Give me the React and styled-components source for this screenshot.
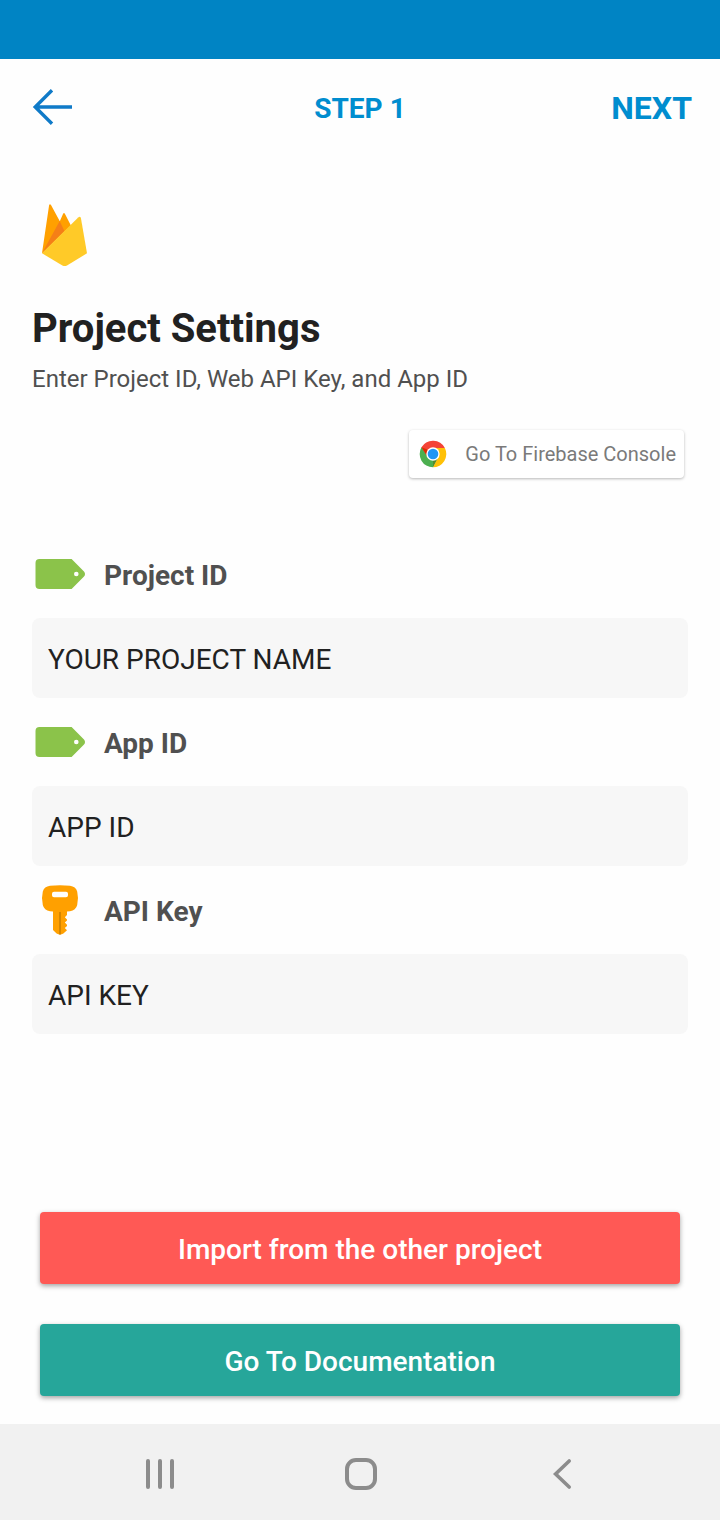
import React from "react";
import styled, { createGlobalStyle } from "styled-components";

const GlobalStyle = createGlobalStyle`
  *, *::before, *::after { box-sizing: border-box; }
  body {
    margin: 0;
    background: #fefefe;
    font-family: Roboto, "Noto Sans", sans-serif;
  }
  button, input { font-family: inherit; }
  svg { display: block; flex: none; }
`;

const Page = styled.div`
  min-height: 100vh;
  display: flex;
  flex-direction: column;
`;

const StatusBar = styled.div`
  height: 59px;
  background: #0084c4;
`;

const Header = styled.header`
  display: grid;
  grid-template-columns: 1fr auto 1fr;
  align-items: center;
  height: 96px;
  padding: 0 28px;
`;

const PlainButton = styled.button`
  display: flex;
  align-items: center;
  justify-content: center;
  padding: 0;
  border: 0;
  background: none;
  color: ${(p) => p.$color || "inherit"};
  cursor: pointer;
`;

const BackButton = styled(PlainButton)`
  justify-self: start;
`;

const NextButton = styled(PlainButton)`
  justify-self: end;
  padding-top: 2px;
  font-size: 32px;
  line-height: 40px;
  font-weight: 700;
`;

const StepTitle = styled.div`
  padding-top: 4px;
  color: #008dcf;
  font-size: 28px;
  line-height: 32px;
  font-weight: 700;
`;

const Content = styled.main`
  flex: 1;
  display: flex;
  flex-direction: column;
  padding: 48px 32px 28px;
`;

const Title = styled.h1`
  margin: 38px 0 0;
  color: #212121;
  font-size: 40px;
  line-height: 48px;
  font-weight: 700;
`;

const Subtitle = styled.p`
  margin: 12px 0 0;
  color: #505050;
  font-size: 24px;
  line-height: 28px;
`;

const ConsoleButton = styled.button`
  align-self: flex-end;
  display: flex;
  align-items: center;
  gap: 16px;
  height: 48px;
  margin: 37px 4px 52px 0;
  padding: 0 8px;
  border: 0;
  border-radius: 4px;
  background: #fff;
  box-shadow: 0 1px 3px rgba(0, 0, 0, 0.28);
  color: #7a7a7a;
  font-size: 20px;
  line-height: 24px;
  white-space: nowrap;
  cursor: pointer;
`;

const Label = styled.label`
  display: flex;
  align-items: center;
  gap: 16px;
  height: 88px;
  color: #505050;
  font-size: 28px;
  line-height: 32px;
  font-weight: 700;
`;

const LabelText = styled.span`
  padding-top: 4px;
`;

const TextInput = styled.input`
  display: block;
  width: 100%;
  height: 80px;
  padding: 2px 16px 0;
  border: 0;
  border-radius: 8px;
  outline: 0;
  background: #f7f7f7;
  color: #212121;
  font-size: 28px;
  line-height: 32px;
`;

const Actions = styled.div`
  display: flex;
  flex-direction: column;
  gap: 40px;
  margin-top: auto;
  padding: 40px 8px 0;
`;

const ActionButton = styled.button`
  height: 72px;
  padding: 4px 16px 0;
  border: 0;
  border-radius: 4px;
  background: ${(p) => p.$color};
  box-shadow: 0 2px 5px rgba(0, 0, 0, 0.36);
  color: #fff;
  font-size: 28px;
  line-height: 32px;
  font-weight: 500;
  cursor: pointer;
`;

const NavBar = styled.nav`
  display: flex;
  align-items: center;
  justify-content: center;
  gap: 169px;
  height: 96px;
  padding: 4px 0 0 2px;
  background: #f1f1f1;
`;

const BackArrow = () => (
  <svg width="48" height="48" viewBox="0 0 48 48" fill="none" stroke="#0f7ac8" strokeWidth="3.4">
    <path d="M44 24H7M24 7.2 7.2 24 24 40.8" />
  </svg>
);

const FirebaseLogo = () => (
  <svg width="64" height="64" viewBox="0 0 64 64">
    <path fill="#ffa000" d="M10 50.3 17.1 2.2Q17.8.4 19 2L27.8 18.2 31 11Q32 9.2 33 11L38.9 22.4Z" />
    <path fill="#f57f17" d="M10 50.3 27.7 18 32.4 28Z" />
    <path fill="#ffca28" d="M10 50.3 46.2 14.5Q48.2 13 48.9 15L55 50.3 35 62.4Q32.7 63.7 30.4 62.4Z" />
  </svg>
);

const ChromeLogo = () => (
  <svg width="32" height="32" viewBox="0 0 48 48">
    <path fill="#4caf50" d="M24 24 6.7 14A20 20 0 0 0 24 44L32 28Z" />
    <path fill="#ffc107" d="M24 15H41.8A20 20 0 0 1 24 44L31.8 28.5Z" />
    <path fill="#f44336" d="M6.7 14A20 20 0 0 1 41.8 15H24L16 28.4Z" />
    <path fill="#dd2c00" d="M6.7 14 16.2 28.5 17.5 18Z" />
    <path fill="#558b2f" d="M24 44 31.8 28.5 24 32Z" />
    <circle cx="24" cy="24" r="10" fill="#fff" />
    <circle cx="24" cy="24" r="8" fill="#2196f3" />
  </svg>
);

const TagIcon = () => (
  <svg width="56" height="56" viewBox="0 0 56 56">
    <path
      fill="#8bc34a"
      fillRule="evenodd"
      d="M7.5 13H39.6L52 25.4Q54 28 52 30.6L39.6 43H7.5Q3.5 43 3.5 39V17Q3.5 13 7.5 13ZM44.3 25.7a2.3 2.3 0 1 0 0 4.6 2.3 2.3 0 0 0 0-4.6Z"
    />
  </svg>
);

const KeyIcon = () => (
  <svg width="56" height="56" viewBox="0 0 56 56">
    <path
      fill="#ffa000"
      fillRule="evenodd"
      d="M18 3.8Q28 2.6 38 3.8 43.8 4.6 45.2 9.5 46.8 16 45.2 23 43.8 28.6 38 29.2L35 29.4V33L32.8 35.2 35 37.4V38.6L32.8 40.6 35 42.8V44L32.8 46 35 48.2 31.4 51.6Q28 53.4 24.6 51.6L21 48V29.4L18 29.2Q12.2 28.6 10.8 23 9.2 16 10.8 9.5 12.2 4.6 18 3.8ZM22 9.7Q20 9.7 20 11.7V13.2Q20 15.2 22 15.2H34Q36 15.2 36 13.2V11.7Q36 9.7 34 9.7Z"
    />
    <path fill="#d68600" d="M27 30H29V52.4H27Z" />
  </svg>
);

const RecentsIcon = () => (
  <svg width="32" height="32" viewBox="0 0 32 32" stroke="#8c8c8c" strokeWidth="4" strokeLinecap="round">
    <path d="M4 3V29M16 3V29M28 3V29" />
  </svg>
);

const HomeIcon = () => (
  <svg width="32" height="32" viewBox="0 0 32 32" fill="none" stroke="#8c8c8c" strokeWidth="4">
    <rect x="2" y="2" width="28" height="28" rx="9" />
  </svg>
);

const NavBackIcon = () => (
  <svg width="32" height="32" viewBox="0 0 32 32" fill="none" stroke="#8c8c8c" strokeWidth="3.6" strokeLinecap="round">
    <path d="M23.2 3 9.6 16 23.2 29" />
  </svg>
);

const fields = [
  { id: "project-id", label: "Project ID", value: "YOUR PROJECT NAME", Icon: TagIcon },
  { id: "app-id", label: "App ID", value: "APP ID", Icon: TagIcon },
  { id: "api-key", label: "API Key", value: "API KEY", Icon: KeyIcon },
];

export default function App() {
  return (
    <Page>
      <GlobalStyle />
      <StatusBar />
      <Header>
        <BackButton type="button" aria-label="Back">
          <BackArrow />
        </BackButton>
        <StepTitle>STEP 1</StepTitle>
        <NextButton type="button" $color="#008dcf">NEXT</NextButton>
      </Header>
      <Content>
        <FirebaseLogo />
        <Title>Project Settings</Title>
        <Subtitle>Enter Project ID, Web API Key, and App ID</Subtitle>
        <ConsoleButton type="button">
          <ChromeLogo />
          Go To Firebase Console
        </ConsoleButton>
        {fields.map(({ id, label, value, Icon }) => (
          <div key={id}>
            <Label htmlFor={id}>
              <Icon />
              <LabelText>{label}</LabelText>
            </Label>
            <TextInput id={id} type="text" defaultValue={value} />
          </div>
        ))}
        <Actions>
          <ActionButton type="button" $color="#ff5955">Import from the other project</ActionButton>
          <ActionButton type="button" $color="#26a69a">Go To Documentation</ActionButton>
        </Actions>
      </Content>
      <NavBar>
        <PlainButton type="button" aria-label="Recent apps"><RecentsIcon /></PlainButton>
        <PlainButton type="button" aria-label="Home"><HomeIcon /></PlainButton>
        <PlainButton type="button" aria-label="Go back"><NavBackIcon /></PlainButton>
      </NavBar>
    </Page>
  );
}
